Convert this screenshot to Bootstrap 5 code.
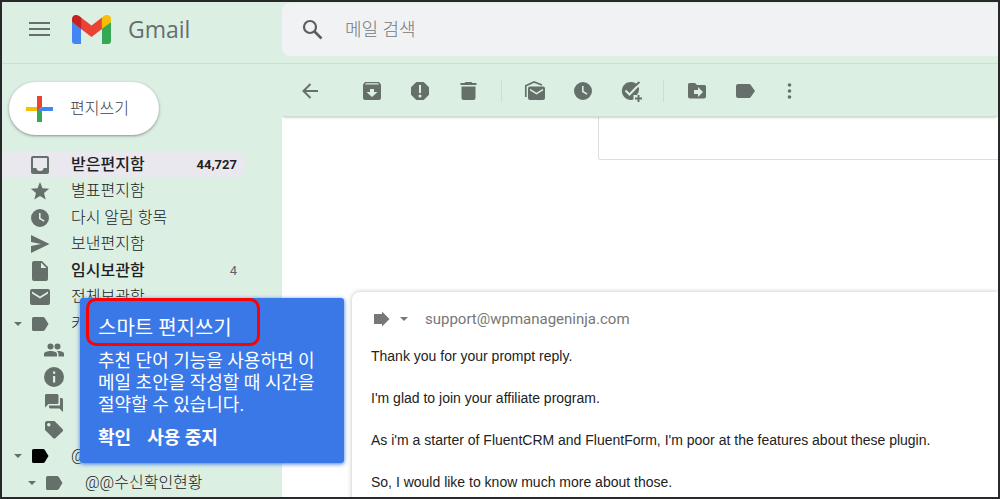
<!DOCTYPE html>
<html lang="ko">
<head>
<meta charset="utf-8">
<meta name="viewport" content="width=device-width, initial-scale=1">
<title>Gmail</title>
<link href="https://cdn.jsdelivr.net/npm/bootstrap@5.3.0/dist/css/bootstrap.min.css" rel="stylesheet">
<style>
  body { font-family: Roboto, "Noto Sans CJK KR", sans-serif; font-size: 16px; color: #202124; }
  .frame { border: 2px solid #29292b; background: #dcefe3; }
  .mint-line { border-bottom: 1px solid #c9ded6; }
  .side { width: 280px; }
  svg { display: block; flex: none; fill: currentColor; }
  .tool, .menu-link { color: #66706b; }
  .tool, .plain { background: none; border: 0; padding: 0; }
  .wordmark { font: 500 23px/30px "Open Sans", sans-serif; color: #686d71; text-decoration: none; }
  .search { background: #f1f2f4; border-radius: 8px 0 0 8px; height: 53px; margin: 1px 0 7px; padding-left: 19px; }
  .search button { color: #5a5e63; }
  .search input { background: none; border: 0; outline: 0; font-size: 18px; font-weight: 300; padding: 0; }
  .search input::placeholder { color: #74787d; opacity: 1; }
  .compose { width: 150px; height: 53px; margin: 18px 0 17px 7px; padding: 0 0 0 17px; border: 0; border-radius: 27px; background: #fff; color: #3c4043; font-weight: 300; line-height: 22px; box-shadow: 0 1px 2px rgba(60,64,67,.35), 0 1px 3px 1px rgba(60,64,67,.15); }
  .menu-link { height: 26px; margin-right: 36px; padding: 0 9px 0 11px; border-radius: 0 13px 13px 0; text-decoration: none; line-height: 24px; font-weight: 300; }
  .menu li:nth-child(even) { margin-bottom: 1px; }
  .menu-link.nested { padding-left: 25px; }
  .menu-link.chosen { background: #e8e8ee; }
  .caret-slot { width: 15px; flex: none; }
  .menu-text { margin-left: 19px; color: #202124; }
  .strong-row .menu-text { font-weight: 500; }
  .count { font-size: 13px; color: #5f6368; font-weight: 400; }
  .chosen .count { font-weight: 700; color: #202124; }
  .toolbar { height: 53px; padding: 2px 0 0 16px; background: #dcefe3; box-shadow: 0 3px 2px -2px rgba(0,0,0,.18); position: relative; }
  .tool-group { display: flex; align-items: center; gap: 24px; }
  .tool-group.first { margin-left: 38px; }
  .rule { width: 1px; height: 22px; margin: 0 21px 0 20px; background: #c9ded6; }
  .quoted { height: 43px; margin-left: 316px; border: solid #dedede; border-width: 0 0 1px 1px; border-radius: 0 0 0 3px; }
  .message { margin: 132px 0 0 70px; padding: 15px 19px; border-radius: 8px 0 0 0; box-shadow: 0 0 5px rgba(0,0,0,.25); font: 14px/21px "Liberation Sans", Arial, sans-serif; color: #222; }
  .message p { margin: 0 0 21px; }
  .recipient { font: 15px/24px Roboto, sans-serif; color: #777; margin-bottom: 15px; }
  .tip { position: absolute; left: 78px; top: 296px; width: 264px; padding: 15px 18px 14px; border-radius: 3px; background: #3a78e7; color: #fff; box-shadow: 0 1px 4px #3a78e7; font-size: 18px; line-height: 22px; z-index: 5; }
  .tip h2 { font-size: 20px; line-height: 30px; font-weight: 400; margin: 0 0 7px; }
  .tip p { margin: 0 0 11px; }
  .tip button { color: #fff; font-size: 18px; font-weight: 700; line-height: 22px; }
  .ring { position: absolute; left: 6px; top: 0; width: 174px; height: 48px; border: 3px solid #f00; border-radius: 10px; }
</style>
</head>
<body>
<svg class="d-none" xmlns="http://www.w3.org/2000/svg">
  <symbol id="clock" viewBox="0 0 24 24"><path fill-rule="evenodd" d="M12 3a9 9 0 1 0 0 18a9 9 0 0 0 0-18zM11 7h1.600v5l4 2.500-.8 1.300L11 13z"/></symbol>
  <symbol id="label" viewBox="0 0 24 24"><path d="M5.500 5H15q1.200 0 1.800.9L20.500 12l-3.700 6.100q-.6.900-1.800.9H5.500Q4 19 4 17.500v-11Q4 5 5.500 5z"/></symbol>
  <symbol id="caret" viewBox="0 0 10 24"><path d="M1 10h8l-4 4z"/></symbol>
</svg>
<div class="frame vh-100 overflow-hidden position-relative d-flex flex-column">
  <header class="d-flex mint-line">
    <div class="side d-flex align-items-center flex-shrink-0 pb-2">
      <button class="plain ms-4 tool" aria-label="기본 메뉴"><svg width="26" height="24" viewBox="0 0 26 24"><path d="M3 5h21v2H3zm0 6h21v2H3zm0 6h21v2H3z"/></svg></button>
      <a href="#" class="wordmark d-flex align-items-center ms-3" aria-label="Gmail">
        <svg class="ms-1" width="40" height="30" viewBox="0 0 40 30"><path fill="#4285f4" d="M0 8l9 6v16H3q-3 0-3-3z"/><path fill="#34a853" d="M30 14l9-6v19q0 3-3 3h-6z"/><path fill="#ea4335" d="M9 3.500l10.500 8L30 3.500V15l-10.500 8L9 15z"/><path fill="#c5221f" d="M0 5.500Q0 1 4 1q2 0 3.500 1.300L9.200 3.600V15L0 8z"/><path fill="#fbbc04" d="M29.800 3.600l1.700-1.300Q33 1 35 1q4 0 4 4.500V8l-9.200 7z"/></svg>
        <span class="ms-3">Gmail</span>
      </a>
    </div>
    <form class="search d-flex align-items-center flex-grow-1" role="search">
      <button type="button" class="plain" aria-label="검색"><svg width="24" height="24" viewBox="0 0 24 24"><circle cx="9" cy="9" r="6" fill="none" stroke="currentColor" stroke-width="2.200"/><path d="M13.500 13.500l7 7" stroke="currentColor" stroke-width="2.600"/></svg></button>
      <input class="ms-3 ps-1 flex-grow-1" type="text" placeholder="메일 검색" aria-label="메일 검색">
    </form>
  </header>
  <div class="d-flex flex-grow-1">
    <nav class="side flex-shrink-0">
      <button class="compose d-flex align-items-center">
        <svg width="28" height="28" viewBox="0 0 28 28"><path fill="#ea4335" d="M11 1h5v11l-5 5z"/><path fill="#fbbc04" d="M0 12h11v4H0z"/><path fill="#34a853" d="M11 16l5-3v14h-5z"/><path fill="#4285f4" d="M16 12h11v4H12z"/></svg>
        <span class="ms-3">편지쓰기</span>
      </button>
      <ul class="menu list-unstyled m-0">
        <li><a href="#" class="menu-link chosen strong-row d-flex align-items-center"><span class="caret-slot"></span><svg width="24" height="24" viewBox="0 0 24 24"><path fill-rule="evenodd" d="M5 3h14q2 0 2 2v14q0 2-2 2H5q-2 0-2-2V5q0-2 2-2zm0 2v10h3.500a3.500 3 0 0 0 7 0H19V5z"/></svg><span class="menu-text">받은편지함</span><span class="count ms-auto">44,727</span></a></li>
        <li><a href="#" class="menu-link d-flex align-items-center"><span class="caret-slot"></span><svg width="24" height="24" viewBox="0 0 24 24"><path d="M12 3l2.500 6.200 6.700.5-5.200 4.300 1.700 6.600L12 17l-5.700 3.600L8 14 2.800 9.700l6.700-.5z"/></svg><span class="menu-text">별표편지함</span></a></li>
        <li><a href="#" class="menu-link d-flex align-items-center"><span class="caret-slot"></span><svg width="24" height="24"><use href="#clock"/></svg><span class="menu-text">다시 알림 항목</span></a></li>
        <li><a href="#" class="menu-link d-flex align-items-center"><span class="caret-slot"></span><svg width="24" height="24" viewBox="0 0 24 24"><path d="M3 3l18.500 9L3 21v-7l10-2-10-2z"/></svg><span class="menu-text">보낸편지함</span></a></li>
        <li><a href="#" class="menu-link strong-row d-flex align-items-center"><span class="caret-slot"></span><svg width="24" height="24" viewBox="0 0 24 24"><path fill-rule="evenodd" d="M6 2h8l6 6v12q0 2-2 2H6q-2 0-2-2V4q0-2 2-2zm7 1.500V9h5.500z"/></svg><span class="menu-text">임시보관함</span><span class="count ms-auto">4</span></a></li>
        <li><a href="#" class="menu-link d-flex align-items-center"><span class="caret-slot"></span><svg width="24" height="24" viewBox="0 0 24 24"><path fill-rule="evenodd" d="M4 4h16q2 0 2 2v12q0 2-2 2H4q-2 0-2-2V6q0-2 2-2zm0 2.500v2l8 5 8-5v-2l-8 5z"/></svg><span class="menu-text">전체보관함</span></a></li>
        <li><a href="#" class="menu-link d-flex align-items-center"><span class="caret-slot"><svg width="10" height="24"><use href="#caret"/></svg></span><svg width="24" height="24"><use href="#label"/></svg><span class="menu-text">카</span></a></li>
        <li><a href="#" class="menu-link nested d-flex align-items-center" aria-label="소셜"><span class="caret-slot"></span><svg width="24" height="24" viewBox="0 0 24 24"><circle cx="8.500" cy="8.500" r="3"/><circle cx="15.500" cy="8.500" r="3"/><path d="M2 18.500V16c0-4 13-4 13 0v2.500zM16.500 18.500V16q0-1.500-1.500-2.800c3-.4 7 .4 7 2.800v2.500z"/></svg></a></li>
        <li><a href="#" class="menu-link nested d-flex align-items-center" aria-label="업데이트"><span class="caret-slot"></span><svg width="24" height="24" viewBox="0 0 24 24"><path fill-rule="evenodd" d="M12 2a10 10 0 1 0 0 20a10 10 0 0 0 0-20zm-1 4.500h2.200v2.200H11zm0 4.500h2.200v6.500H11z"/></svg></a></li>
        <li><a href="#" class="menu-link nested d-flex align-items-center" aria-label="포럼"><span class="caret-slot"></span><svg width="24" height="24" viewBox="0 0 24 24"><path d="M4 3h11q1.500 0 1.500 1.500v7Q16.500 13 15 13H6.500L3 16.500V4.500Q3 3 4 3zM18 7h1.500Q21 7 21 8.500V21l-3.500-3.500H8.500Q7 17.500 7 16v-1.500h11z"/></svg></a></li>
        <li><a href="#" class="menu-link nested d-flex align-items-center" aria-label="프로모션"><span class="caret-slot"></span><svg width="24" height="24" viewBox="0 0 24 24"><path fill-rule="evenodd" d="M5 3h7.500l8 8q1.300 1.300 0 2.600L13.600 20q-1.200 1.200-2.500 0L3 12V5q0-2 2-2zm1.800 2a1.700 1.700 0 1 0 0 3.400a1.700 1.700 0 0 0 0-3.400z"/></svg></a></li>
        <li><a href="#" class="menu-link d-flex align-items-center"><span class="caret-slot"><svg width="10" height="24"><use href="#caret"/></svg></span><svg class="text-black" width="24" height="24"><use href="#label"/></svg><span class="menu-text">@</span></a></li>
        <li><a href="#" class="menu-link nested d-flex align-items-center"><span class="caret-slot"><svg width="10" height="24"><use href="#caret"/></svg></span><svg width="24" height="24"><use href="#label"/></svg><span class="menu-text">@@수신확인현황</span></a></li>
      </ul>
    </nav>
    <main class="flex-grow-1 bg-white">
      <div class="toolbar mint-line d-flex align-items-center">
        <button class="tool" aria-label="뒤로"><svg width="24" height="24" viewBox="0 0 24 24"><path d="M12.500 5l-7 7 7 7M5.500 12H20" fill="none" stroke="currentColor" stroke-width="2"/></svg></button>
        <div class="tool-group first">
          <button class="tool" aria-label="보관처리"><svg width="24" height="24" viewBox="0 0 24 24"><path fill-rule="evenodd" d="M5 3h14l2 2.500V19q0 2-2 2H5q-2 0-2-2V5.500zm.8 1.200L5 5.500h14l-.8-1.300zM10 10v3H6.500l5.500 5 5.500-5H14v-3z"/></svg></button>
          <button class="tool" aria-label="스팸신고"><svg width="24" height="24" viewBox="0 0 24 24"><path fill-rule="evenodd" d="M8.300 3h7.400L21 8.300v7.400L15.700 21H8.300L3 15.700V8.300zM11 6v8h2V6zm1 9.500a1.500 1.500 0 1 0 0 3a1.500 1.500 0 0 0 0-3z"/></svg></button>
          <button class="tool" aria-label="삭제"><svg width="25" height="24" viewBox="0 0 24 24"><path d="M9 3h6l1 1h4v2H4V4h4zM5 7.500h14V19q0 2-2 2H7q-2 0-2-2z"/></svg></button>
        </div>
        <span class="rule"></span>
        <div class="tool-group">
          <button class="tool" aria-label="읽지않음으로 표시"><svg width="24" height="24" viewBox="0 0 24 24"><path fill-rule="evenodd" d="M7 7.500h13q2 0 2 2V19q0 2-2 2H7q-2 0-2-2V9.500q0-2 2-2zM7 9.800v1.700l6.500 4 6.500-4V9.800l-6.500 4z"/><path d="M2.800 18V6.800L11 3l8 3" fill="none" stroke="currentColor" stroke-width="1.700"/></svg></button>
          <button class="tool" aria-label="다시 알림"><svg width="24" height="24"><use href="#clock"/></svg></button>
          <button class="tool" aria-label="할 일에 추가"><svg width="24" height="24" viewBox="0 0 24 24"><path d="M17 4.500A9 9 0 1 0 14.500 20.500V16H18a9 9 0 0 0 2-7z"/><path d="M6.500 11.500l4 4L21.500 4" fill="none" stroke="#dcefe3" stroke-width="2"/><path d="M16.500 6.500l4-3.500M19.500 16v7M16 19.500h7" stroke="currentColor" stroke-width="2"/></svg></button>
        </div>
        <span class="rule"></span>
        <div class="tool-group">
          <button class="tool" aria-label="이동"><svg width="24" height="24" viewBox="0 0 24 24"><path fill-rule="evenodd" d="M4.500 4H10l2 2h7.500Q21 6 21 7.500v10q0 2-2 2H5q-2 0-2-2v-12Q3 4 4.500 4zM9 11v4h4v3l5-5-5-5v3z"/></svg></button>
          <button class="tool" aria-label="라벨"><svg width="25" height="24" viewBox="0 0 25 24"><path d="M5 5h11q1.200 0 1.800.9L22 12l-4.200 6.100q-.6.900-1.800.9H5q-2 0-2-2V7q0-2 2-2z"/></svg></button>
          <button class="tool" aria-label="더보기"><svg width="15" height="24" viewBox="0 0 15 24"><circle cx="7.500" cy="6" r="1.800"/><circle cx="7.500" cy="12" r="1.800"/><circle cx="7.500" cy="18" r="1.800"/></svg></button>
        </div>
      </div>
      <div class="quoted"></div>
      <article class="message">
        <div class="recipient d-flex align-items-center">
          <button class="tool d-flex align-items-center text-reset" aria-label="답장 유형"><svg width="24" height="24" viewBox="0 0 24 24"><path d="M3 7h8V4.500l7.500 7.500-7.500 7.500V17H3z"/></svg><svg class="ms-1" width="10" height="24"><use href="#caret"/></svg></button>
          <span class="ms-3">support@wpmanageninja.com</span>
        </div>
        <p>Thank you for your prompt reply.</p>
        <p>I'm glad to join your affiliate program.</p>
        <p>As i'm a starter of FluentCRM and FluentForm, I'm poor at the features about these plugin.</p>
        <p>So, I would like to know much more about those.</p>
      </article>
    </main>
  </div>
  <section class="tip" aria-label="스마트 편지쓰기">
    <span class="ring"></span>
    <h2>스마트 편지쓰기</h2>
    <p>추천 단어 기능을 사용하면 이메일 초안을 작성할 때 시간을 절약할 수 있습니다.</p>
    <div class="d-flex gap-3"><button class="plain">확인</button><button class="plain">사용 중지</button></div>
  </section>
</div>
<script src="https://cdn.jsdelivr.net/npm/bootstrap@5.3.0/dist/js/bootstrap.bundle.min.js"></script>
</body>
</html>
